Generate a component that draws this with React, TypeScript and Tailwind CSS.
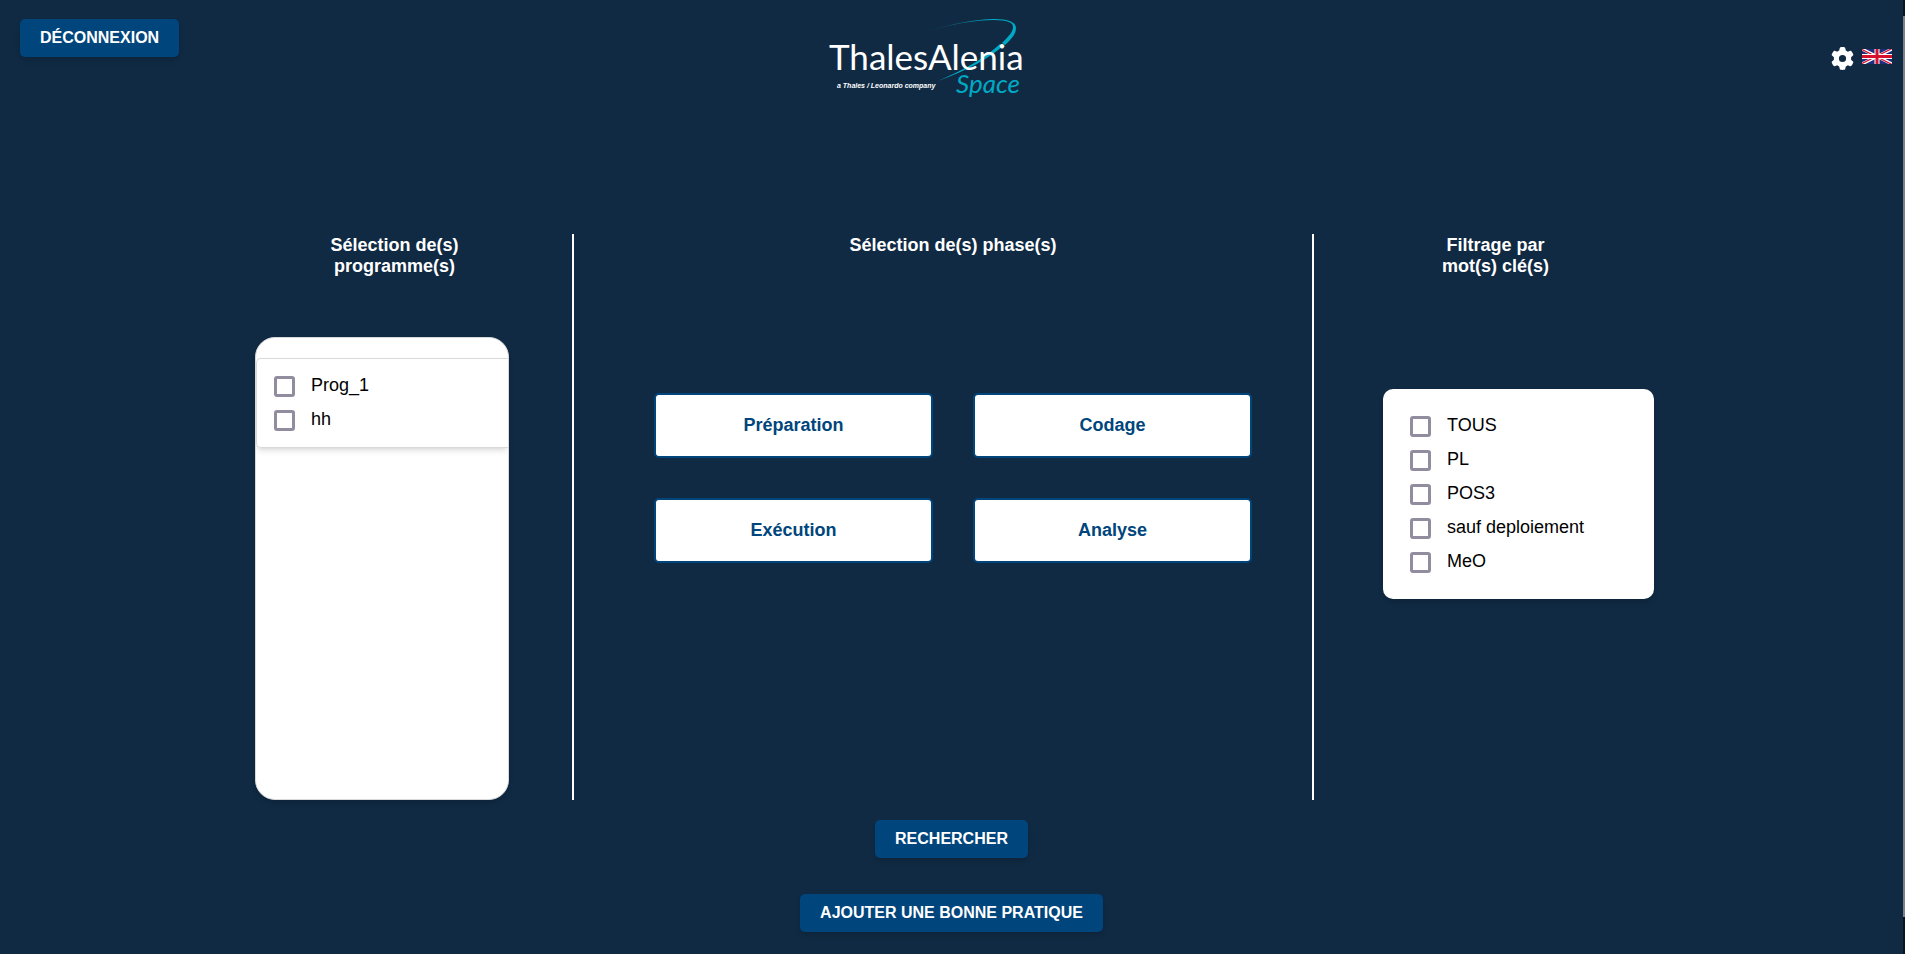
import { FaGear } from "react-icons/fa6";

const programmes = ["Prog_1", "hh"];
const phases = ["Préparation", "Codage", "Exécution", "Analyse"];
const keywords = ["TOUS", "PL", "POS3", "sauf deploiement", "MeO"];

function ActionButton({ children }: { children: string }) {
  return (
    <button
      type="button"
      className="h-[38px] rounded-[5px] bg-[#00457c] px-5 text-base font-bold text-white uppercase shadow-md"
    >
      {children}
    </button>
  );
}

function CheckList({ items, name }: { items: string[]; name: string }) {
  return (
    <ul className="flex flex-col gap-[11px]">
      {items.map((item, index) => (
        <li key={item} className="flex items-start gap-4">
          <input
            id={`${name}-${index}`}
            type="checkbox"
            className="mt-0.5 size-[21px] shrink-0 appearance-none rounded-[3px] border-3 border-[#918d9f] bg-white checked:bg-[#00457c]"
          />
          <label htmlFor={`${name}-${index}`} className="text-lg leading-[23px] text-black">
            {item}
          </label>
        </li>
      ))}
    </ul>
  );
}

function Logo() {
  return (
    <svg viewBox="0 0 200 100" className="mr-[60px] h-[100px] w-[200px]" role="img" aria-label="Thales Alenia Space">
      <defs>
        <linearGradient id="orbit" x1="100" y1="0" x2="165" y2="0" gradientUnits="userSpaceOnUse">
          <stop offset="0" stopColor="#00a9c4" stopOpacity="0.1" />
          <stop offset="1" stopColor="#00a9c4" />
        </linearGradient>
      </defs>
      <path
        d="M102 21C124 14 150 9 168 9C182 9 190 12 190 18C190 23 187 28 179 35L176 33C182 27 187 22 187 17C187 12 181 10.5 168 10C150 10 124 14.5 102 21Z"
        fill="url(#orbit)"
      />
      <path d="M177 36C163 48 143 60 112 71C141 58.5 160 47 174 34Z" fill="#00a9c4" />
      <text x="3" y="60" fontSize="35" fill="#ffffff" className="font-['Lato',sans-serif]">
        ThalesAlenia
      </text>
      <text x="11" y="78" fontSize="7" fontStyle="italic" fontWeight="700" fill="#ffffff" className="font-['Liberation_Sans',sans-serif]">
        a Thales / Leonardo company
      </text>
      <text x="130" y="83" fontSize="26" fontStyle="italic" fill="#00a9c4" className="font-['Lato',sans-serif]">
        Space
      </text>
    </svg>
  );
}

function UkFlag() {
  return (
    <svg viewBox="0 0 60 30" className="h-[15px] w-[30px]" aria-hidden="true">
      <path d="M0 0H60V30H0Z" fill="#1c2f7c" />
      <path d="M0 0L60 30M60 0L0 30" stroke="#ffffff" strokeWidth="6" />
      <path d="M0 0L30 15M60 30L30 15" stroke="#d6112e" strokeWidth="2.5" transform="translate(0 1)" />
      <path d="M60 0L30 15M0 30L30 15" stroke="#d6112e" strokeWidth="2.5" transform="translate(0 -1)" />
      <path d="M30 0V30M0 15H60" stroke="#ffffff" strokeWidth="10" />
      <path d="M30 0V30M0 15H60" stroke="#d6112e" strokeWidth="6" />
    </svg>
  );
}

export default function App() {
  return (
    <div className="flex min-h-screen bg-[#102a43] font-['Liberation_Sans',Arial,sans-serif]">
      <div className="flex min-w-0 flex-1 flex-col items-center pb-[22px]">
        <header className="grid w-full grid-cols-[1fr_auto_1fr] items-start pt-[10px] pr-[11px] pl-5">
          <div className="pt-[9px]">
            <ActionButton>Déconnexion</ActionButton>
          </div>
          <Logo />
          <div className="flex items-start justify-end gap-2 pt-[37px]">
            <button type="button" aria-label="Paramètres" className="text-white">
              <FaGear className="size-[23px]" />
            </button>
            <button type="button" aria-label="English" className="pt-0.5">
              <UkFlag />
            </button>
          </div>
        </header>

        <main className="mt-[124px] grid w-full max-w-[1405px] grid-cols-[325fr_740fr_340fr]">
          <section className="flex flex-col border-r-2 border-white pt-px pl-1.5">
            <h2 className="w-[254px] pl-[25px] text-center text-lg leading-[21px] font-bold text-white">
              Sélection de(s)
              <br />
              programme(s)
            </h2>
            <div className="mt-[60px] h-[463px] w-[254px] overflow-hidden rounded-[20px] border border-[#d9d9d9] bg-white pt-5 shadow-md">
              <div className="rounded-l-[5px] border border-r-0 border-[#d9d9d9] pt-[15px] pb-4 pl-[17px] shadow-md">
                <CheckList items={programmes} name="programme" />
              </div>
            </div>
          </section>

          <section className="flex flex-col border-r-2 border-white pt-px pr-[60px] pl-20">
            <h2 className="text-center text-lg leading-[21px] font-bold text-white">Sélection de(s) phase(s)</h2>
            <div className="mt-[137px] grid grid-cols-2 gap-10">
              {phases.map((phase) => (
                <button
                  key={phase}
                  type="button"
                  className="h-[65px] rounded-[5px] border-2 border-[#00457c] bg-white text-lg leading-[21px] font-bold text-[#00457c]"
                >
                  {phase}
                </button>
              ))}
            </div>
          </section>

          <section className="flex flex-col items-end pt-px">
            <h2 className="w-[271px] pr-[46px] text-center text-lg leading-[21px] font-bold text-white">
              Filtrage par
              <br />
              mot(s) clé(s)
            </h2>
            <div className="mt-[112px] w-[271px] rounded-[10px] bg-white pt-[25px] pb-[26px] pl-[27px] shadow-md">
              <CheckList items={keywords} name="keyword" />
            </div>
          </section>
        </main>

        <div className="mt-5 flex flex-col items-center gap-9">
          <ActionButton>Rechercher</ActionButton>
          <ActionButton>Ajouter une bonne pratique</ActionButton>
        </div>
      </div>

      <div className="flex w-0.5 flex-col bg-[#0b1420] pt-4 pb-[37px]" aria-hidden="true">
        <div className="flex-1 bg-[#7b8086]" />
      </div>
    </div>
  );
}
